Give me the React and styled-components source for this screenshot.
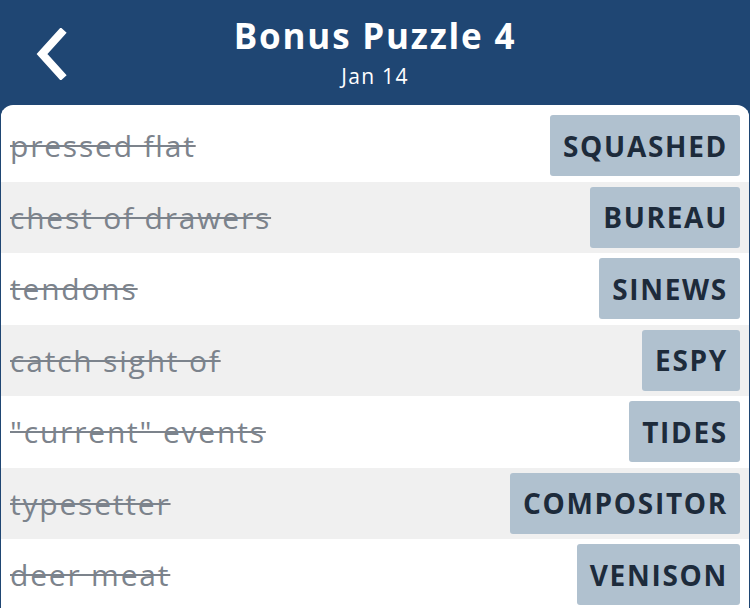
import styled, { createGlobalStyle } from "styled-components";

const GlobalStyle = createGlobalStyle`
  html, body {
    margin: 0;
    padding: 0;
    background: #1f4673;
  }
  body {
    font-family: "Open Sans", "Noto Sans", sans-serif;
  }
`;

const Screen = styled.div`
  width: 750px;
  height: 608px;
  overflow: hidden;
  background: #1f4673;
  display: flex;
  flex-direction: column;
`;

const Header = styled.header`
  height: 105px;
  display: flex;
  align-items: center;
  justify-content: center;
  position: relative;
  color: #fff;
`;

const BackButton = styled.button`
  position: absolute;
  left: 27px;
  top: 26px;
  width: 46px;
  height: 56px;
  border: 0;
  padding: 0;
  background: none;
  display: flex;
  align-items: center;
  justify-content: center;
`;

const TitleBlock = styled.div`
  display: flex;
  flex-direction: column;
  align-items: center;
  margin-top: -4px;
`;

const Title = styled.h1`
  margin: 0;
  font-size: 35px;
  font-weight: 700;
  line-height: 46px;
  letter-spacing: 1.8px;
`;

const Subtitle = styled.div`
  font-size: 21px;
  line-height: 26px;
  margin-top: 4px;
  letter-spacing: 1.3px;
`;

const Card = styled.section`
  flex: 1;
  background: #fff;
  margin: 0 1px;
  border-radius: 12px 12px 0 0;
  padding-top: 5px;
  overflow: hidden;
`;

const Row = styled.div`
  height: 71.5px;
  box-sizing: border-box;
  display: flex;
  align-items: center;
  justify-content: space-between;
  padding: 0 9px 0 9px;
  background: ${({ $shaded }) => ($shaded ? "#f0f0f0" : "#fff")};
`;

const Clue = styled.span`
  font-size: 30px;
  letter-spacing: 1.8px;
  color: #7c838c;
  text-decoration: line-through;
  text-decoration-thickness: 2px;
`;

const Answer = styled.span`
  height: 61px;
  display: flex;
  align-items: center;
  padding: 0 12px 0 13px;
  border-radius: 3px;
  background: #b0c1cf;
  color: #1d2b3b;
  font-size: 28px;
  font-weight: 700;
  letter-spacing: 1.7px;
`;

const entries = [
  ["pressed flat", "SQUASHED"],
  ["chest of drawers", "BUREAU"],
  ["tendons", "SINEWS"],
  ["catch sight of", "ESPY"],
  ['"current" events', "TIDES"],
  ["typesetter", "COMPOSITOR"],
  ["deer meat", "VENISON"],
];

const App = () => (
  <Screen>
    <GlobalStyle />
    <Header>
      <BackButton aria-label="Back">
        <svg width="34" height="52" viewBox="0 0 34 52">
          <path d="M28 5 L9 26 L28 47" fill="none" stroke="#fff" strokeWidth="8" strokeLinecap="square" />
        </svg>
      </BackButton>
      <TitleBlock>
        <Title>Bonus Puzzle 4</Title>
        <Subtitle>Jan 14</Subtitle>
      </TitleBlock>
    </Header>
    <Card>
      {entries.map(([clue, answer], i) => (
        <Row key={clue} $shaded={i % 2 === 1}>
          <Clue>{clue}</Clue>
          <Answer>{answer}</Answer>
        </Row>
      ))}
    </Card>
  </Screen>
);

export default App;
